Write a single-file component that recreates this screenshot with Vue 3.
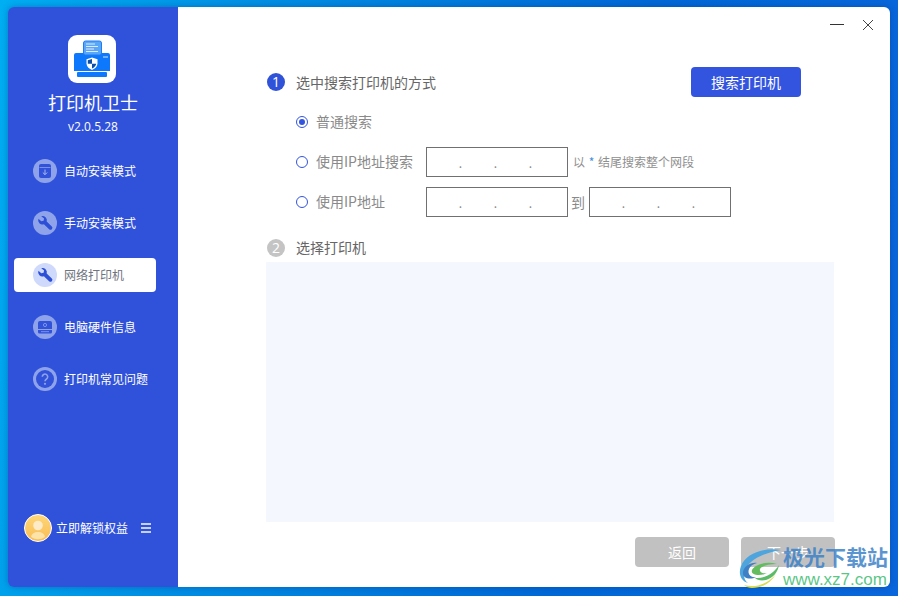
<script setup>
const menu = [
  { label: '自动安装模式', icon: 'install' },
  { label: '手动安装模式', icon: 'wrench' },
  { label: '网络打印机', icon: 'wrench', active: true },
  { label: '电脑硬件信息', icon: 'pc' },
  { label: '打印机常见问题', icon: 'help' }
]
const dots = [1, 2, 3]
</script>

<template>
  <div class="desktop">
    <div class="window">
      <aside class="sidebar">
        <div class="logo">
          <svg width="48" height="48" viewBox="0 0 48 48">
            <rect width="48" height="48" rx="9" fill="#fff" />
            <path d="M6 20a2 2 0 0 1 2-2h8v1h17v-1h7a2 2 0 0 1 2 2v16H6z" fill="#0d78fb" />
            <rect x="15.500" y="6" width="18" height="14" rx="2" fill="#5aa6f7" stroke="#1f7cf5" stroke-width="1" />
            <path d="M18 9h9M18 11.500h12M18 14h8M18 16.500h12" stroke="#dcecff" stroke-width="1" />
            <path d="M35 22h5" stroke="#cfe4ff" stroke-width="1" />
            <rect x="9" y="37" width="30" height="5" rx="1" fill="#0d78fb" />
            <path d="M24 22.500l5.500 1.800v4.200c0 3-2.400 5.200-5.500 6.500-3.100-1.300-5.500-3.500-5.500-6.500v-4.200z" fill="#fff" />
            <path d="M24 24v4.800h-4.200v-3.500zM24 28.800h4.200c-.3 2.200-2 3.800-4.200 4.800z" fill="#0d4fa8" />
          </svg>
        </div>
        <div class="app-name">打印机卫士</div>
        <div class="version">v2.0.5.28</div>
        <nav class="menu">
          <div v-for="item in menu" :key="item.label" class="menu-item" :class="{ active: item.active }">
            <span class="menu-icon">
              <svg width="24" height="24" viewBox="0 0 24 24">
                <template v-if="item.icon === 'install'">
                  <path d="M6 7a2 2 0 0 1 2-2h8a2 2 0 0 1 2 2v10a2 2 0 0 1-2 2H8a2 2 0 0 1-2-2z" fill="#3152d9" />
                  <path d="M6.500 8.500h11" stroke="#8fa3ea" stroke-width=".8" />
                  <path d="M12 10.500v5M9.800 13.500l2.200 2.200 2.200-2.200" fill="none" stroke="#a9b9f0" stroke-width="1" />
                </template>
                <template v-else-if="item.icon === 'wrench'">
                  <path d="M8.200 5.200a4.300 4.300 0 0 1 5.500 5.300l5.100 5a1.900 1.900 0 0 1-2.700 2.700l-5.200-5a4.300 4.300 0 0 1-5.500-5.500l2.900 2.600 2.300-.6.500-2.200z" fill="#2d4ed6" />
                </template>
                <template v-else-if="item.icon === 'pc'">
                  <path d="M5 8a2 2 0 0 1 2-2h10a2 2 0 0 1 2 2v6H5z" fill="#3152d9" />
                  <circle cx="12" cy="10" r="1.600" fill="none" stroke="#8fa3ea" stroke-width=".8" />
                  <path d="M5 15h14v2a1.500 1.500 0 0 1-1.500 1.500h-11A1.500 1.500 0 0 1 5 17z" fill="#3152d9" />
                  <path d="M8 16.700h8" stroke="#8fa3ea" stroke-width=".8" />
                </template>
                <template v-else>
                  <circle cx="12" cy="12" r="9" fill="#3152d9" />
                  <path d="M9.300 9.800a2.700 2.700 0 1 1 4.200 2.200c-1 .7-1.500 1.100-1.500 2.300" fill="none" stroke="#8fa3ea" stroke-width="1.600" />
                  <circle cx="12" cy="16.800" r="1.100" fill="#8fa3ea" />
                </template>
              </svg>
            </span>
            <span class="menu-label">{{ item.label }}</span>
          </div>
        </nav>
        <div class="account">
          <span class="avatar">
            <svg width="28" height="28" viewBox="0 0 28 28">
              <defs>
                <linearGradient id="av" x1="0" y1="0" x2="0" y2="1">
                  <stop offset="0" stop-color="#fdd678" />
                  <stop offset="1" stop-color="#f9bd55" />
                </linearGradient>
              </defs>
              <circle cx="14" cy="14" r="13.500" fill="url(#av)" stroke="#fff" stroke-width="1" />
              <circle cx="14" cy="11.500" r="4.800" fill="#fdebc8" />
              <path d="M7 23c.5-3.500 3.500-5 7-5s6.500 1.500 7 5a12 12 0 0 1-14 0z" fill="#fde3a8" />
            </svg>
          </span>
          <span class="account-text">立即解锁权益</span>
          <span class="burger"><i></i><i></i><i></i></span>
        </div>
      </aside>

      <main class="main">
        <div class="win-controls">
          <span class="minimize"></span>
          <svg width="12" height="12" viewBox="0 0 12 12">
            <path d="M1 1l10 10M11 1L1 11" stroke="#444" stroke-width="1" />
          </svg>
        </div>

        <div class="step-row">
          <span class="badge">1</span>
          <span class="step-title">选中搜索打印机的方式</span>
          <button class="search-btn">搜索打印机</button>
        </div>

        <div class="options">
          <div class="option">
            <span class="radio checked"></span>
            <span class="opt-text">普通搜索</span>
          </div>
          <div class="option">
            <span class="radio"></span>
            <span class="opt-text opt-label">使用IP地址搜索</span>
            <span class="ip-box"><span v-for="d in dots" :key="d" class="seg">.</span></span>
            <span class="note">以 <b>*</b> 结尾搜索整个网段</span>
          </div>
          <div class="option">
            <span class="radio"></span>
            <span class="opt-text opt-label">使用IP地址</span>
            <span class="ip-box"><span v-for="d in dots" :key="d" class="seg">.</span></span>
            <span class="to">到</span>
            <span class="ip-box"><span v-for="d in dots" :key="d" class="seg">.</span></span>
          </div>
        </div>

        <div class="step-row second">
          <span class="badge gray">2</span>
          <span class="step-title">选择打印机</span>
        </div>
        <div class="printer-list"></div>

        <div class="actions">
          <button class="gray-btn">返回</button>
          <button class="gray-btn">下一步</button>
        </div>
      </main>
    </div>

    <div class="watermark">
      <svg class="wm-logo" width="46" height="40" viewBox="0 0 46 40">
        <path d="M43 2C27-1 8 5 3 18c-3 8 0 15 7 17-4-3-5-8-3-13C11 12 25 5 43 2z" fill="#4ea5de" />
        <path d="M5 24c1-6 8-10 14-9-4 1-7 3-8 6-2 5 2 9 7 8-5 3-14 2-13-5z" fill="#3f7fc4" />
        <path d="M14 22c3-6 15-9 25-6-9 0-15 2-17 5-1 3 3 5 7 4-5 3-17 3-15-3z" fill="#63bd5e" />
        <path d="M41 17c-1 7-6 13-13 15-5 1-9 0-11-2 10 1 19-5 24-13z" fill="#5cbb68" />
        <path d="M6 37c12 3 24-1 32-11-5 9-14 14-24 14-3 0-6-1-8-3z" fill="#dbdb4e" />
      </svg>
      <div class="wm-text">
        <div class="wm-cn">极光下载站</div>
        <div class="wm-url">www.xz7.com</div>
      </div>
    </div>
  </div>
</template>

<style>
html, body { margin: 0; overflow: hidden; }
</style>

<style scoped>
.desktop {
  position: relative;
  box-sizing: border-box;
  width: 898px;
  height: 596px;
  padding: 7px 8px 9px;
  background: linear-gradient(100deg, #00aef2 0%, #0090e4 25%, #0068d6 65%, #0a66dc 100%);
  font-family: "Noto Sans CJK SC", "Noto Sans", sans-serif;
}
.window {
  display: flex;
  height: 580px;
  border-radius: 6px;
  overflow: hidden;
  box-shadow: 0 0 6px rgba(0, 40, 120, .35);
}
.sidebar {
  display: flex;
  flex-direction: column;
  align-items: center;
  width: 170px;
  padding: 28px 2px 0 0;
  box-sizing: border-box;
  background: #3052da;
  color: #fff;
}
.logo { width: 48px; height: 48px; }
.app-name {
  margin: 6px 0 0 2px;
  font-size: 18px;
  line-height: 26px;
}
.version {
  margin: 2px 0 0 2px;
  font-family: "Open Sans", sans-serif;
  font-size: 12px;
  line-height: 20px;
}
.menu {
  align-self: stretch;
  margin-top: 17px;
  padding: 0 20px 0 6px;
  display: flex;
  flex-direction: column;
  gap: 18px;
}
.menu-item {
  display: flex;
  align-items: center;
  gap: 7px;
  height: 34px;
  padding-left: 19px;
  border-radius: 4px;
  font-size: 12px;
  color: #fff;
}
.menu-label { padding-bottom: 2px; }
.menu-item.active {
  background: #fff;
  color: #6f7480;
}
.menu-icon {
  width: 24px;
  height: 24px;
  border-radius: 50%;
  background: #8fa3ea;
}
.active .menu-icon { background: #cfd9fb; }
.account {
  align-self: stretch;
  margin-top: auto;
  margin-bottom: 45px;
  padding-left: 16px;
  display: flex;
  align-items: center;
  height: 28px;
  font-size: 12px;
}
.avatar { width: 28px; height: 28px; }
.account-text { margin-left: 4px; padding-bottom: 1px; }
.burger {
  margin-left: 13px;
  display: flex;
  flex-direction: column;
  gap: 2px;
  width: 10px;
}
.burger i { height: 2px; background: #c6d0f5; }

.main {
  position: relative;
  flex: 1;
  box-sizing: border-box;
  padding: 60px 55px 0 88px;
  background: #fff;
  color: #6a6a6a;
}
.win-controls {
  position: absolute;
  top: 12px;
  right: 16px;
  display: flex;
  align-items: center;
  gap: 18px;
}
.minimize {
  width: 14px;
  height: 1px;
  margin-top: -2px;
  background: #333;
}
.step-row {
  display: flex;
  align-items: center;
  height: 30px;
  padding: 0 34px 0 1px;
}
.step-row.second {
  height: 20px;
  margin-top: 21px;
}
.second .step-title { padding-bottom: 2px; }
.badge {
  width: 18px;
  height: 18px;
  border-radius: 50%;
  background: #2f52d8;
  color: #fff;
  font-size: 14px;
  line-height: 18px;
  text-align: center;
  font-family: "Open Sans", sans-serif;
}
.badge.gray { background: #c4c4c4; }
.step-title {
  margin-left: 11px;
  font-size: 14px;
  color: #666;
}
.search-btn {
  margin-left: auto;
  width: 110px;
  height: 30px;
  border: 0;
  border-radius: 4px;
  background: #3354df;
  color: #fff;
  font: 14px "Noto Sans CJK SC", sans-serif;
}
.options {
  display: flex;
  flex-direction: column;
  gap: 10px;
  margin-top: 10px;
  padding-left: 30px;
}
.option {
  display: flex;
  align-items: center;
  height: 30px;
  font-size: 14px;
  color: #8a8a8a;
}
.opt-text { padding-bottom: 2px; }
.radio {
  box-sizing: border-box;
  width: 12px;
  height: 12px;
  margin-right: 8px;
  border: 1px solid #3354df;
  border-radius: 50%;
  background: #fff;
}
.radio.checked {
  padding: 2px;
  background: #3354df content-box;
}
.opt-label { width: 110px; }
.ip-box {
  box-sizing: border-box;
  display: flex;
  width: 142px;
  height: 30px;
  border: 1px solid #707070;
  background: #fff;
}
.seg {
  width: 35px;
  padding-top: 3px;
  text-align: right;
  font-size: 12px;
  line-height: 24px;
  color: #888;
}
.note {
  margin-left: 5px;
  padding-bottom: 2px;
  font-size: 12px;
  color: #8f8f8f;
}
.note b { margin: 0 1px; font-weight: 400; color: #3f8fe0; }
.to {
  margin: 0 4px 0 3px;
  padding-bottom: 1px;
  font-size: 14px;
  color: #8a8a8a;
}
.printer-list {
  height: 260px;
  margin: 4px 1px 0 0;
  background: #f5f7fe;
}
.actions {
  display: flex;
  justify-content: flex-end;
  gap: 12px;
  margin-top: 15px;
}
.gray-btn {
  width: 94px;
  height: 30px;
  border: 0;
  border-radius: 4px;
  background: #c1c1c1;
  color: #fff;
  font: 14px "Noto Sans CJK SC", sans-serif;
}
.watermark {
  position: absolute;
  left: 738px;
  top: 545px;
  display: flex;
  align-items: flex-start;
}
.wm-logo { margin-top: 3px; }
.wm-text { margin-left: -1px; }
.wm-cn {
  font-size: 21px;
  font-weight: 700;
  line-height: 22px;
  color: rgba(60, 130, 200, .85);
}
.wm-url {
  margin-top: 3px;
  font-family: "Liberation Sans", sans-serif;
  font-size: 17px;
  line-height: 20px;
  color: rgba(80, 195, 125, .95);
}
</style>
